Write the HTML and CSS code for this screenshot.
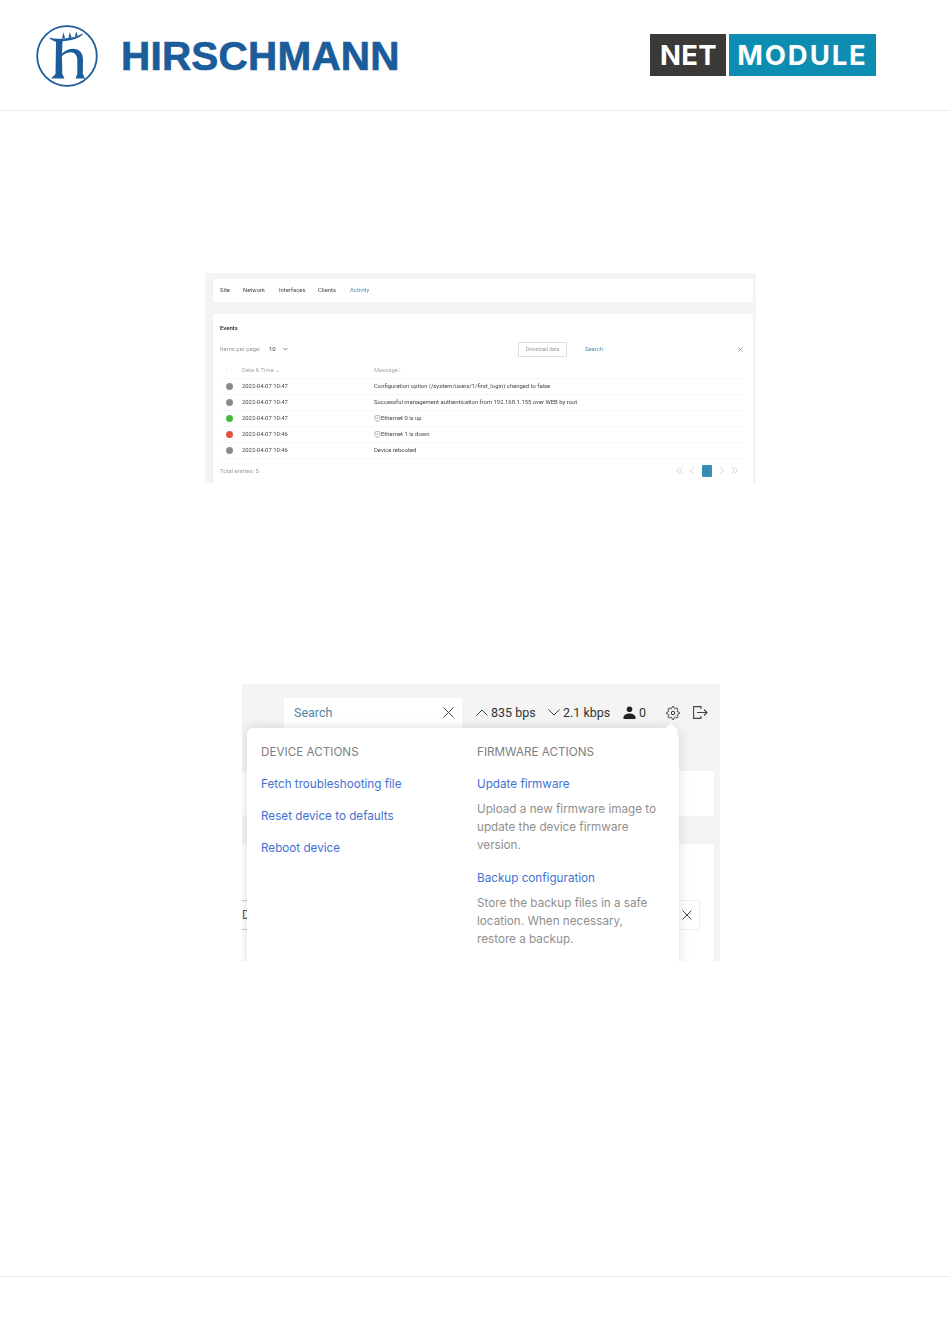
FILE: index.html
```html
<!DOCTYPE html>
<html lang="en">
<head>
  <meta charset="utf-8">
  <title>NetModule manual page</title>
  <link rel="stylesheet" href="styles.css">
</head>
<body>
  <!-- Logos -->
  <header class="page-head">
    <div class="brand">
      <svg class="brand-mark" width="64" height="64" viewBox="0 0 64 64" aria-hidden="true">
        <circle cx="32" cy="32" r="29.800" fill="none" stroke="#1b5c9b" stroke-width="1.800"/>
        <path fill="#1b5c9b" d="M14.500 13.800C17 14.300 19.500 14.700 22 14.700C32 14.700 42 13.500 47.500 9.500L48 10.200C44 14.800 35 16.500 27.500 17.300L27 29.500C30 26.500 34 24.800 38 24.800C44.500 24.800 48 29 48 35.500L47.800 50L50 54.500L40.500 54.500L42.300 50L42.300 36C42.300 31 39.500 28.200 35.800 28.200C32.500 28.200 29.500 29.800 27 32L27.300 50L29.500 54.500L16 54.500L20.500 50L21 17.800C18.500 17 16.200 15.800 14.500 14.500z"/>
        <path fill="#1b5c9b" d="M27 14.300l1.500-6 1.500 5.800zM33.500 14l1.300-6 1.700 5.500zM39.800 13l1.300-5.500 1.700 4.200z"/>
      </svg>
      <span class="brand-name">HIRSCHMANN</span>
    </div>
    <div class="netmodule">
      <span class="nm-net">NET</span>
      <span class="nm-module">MODULE</span>
    </div>
  </header>

  <main class="page-body">
    <!-- Events screenshot -->
    <section class="shot shot-events">
      <nav class="tabs card">
        <span class="tab tab-site">Site</span>
        <span class="tab tab-network">Network</span>
        <span class="tab tab-interfaces">Interfaces</span>
        <span class="tab tab-clients">Clients</span>
        <span class="tab active">Activity</span>
      </nav>
      <div class="events card">
        <h2>Events</h2>
        <div class="ev-tools">
          <span class="ev-muted">Items per page:</span>
          <span class="ev-count">10</span>
          <svg class="ev-chev" width="5" height="4" viewBox="0 0 5 4"><path d="M.5 1l2 2 2-2" fill="none" stroke="#333" stroke-width=".6"/></svg>
          <span class="ev-download">Download data</span>
          <span class="ev-search">Search</span>
          <svg class="ev-x" width="5" height="5" viewBox="0 0 5 5"><path d="M.3.3l4.400 4.400M4.700.3L.3 4.700" stroke="#555" stroke-width=".5"/></svg>
        </div>
        <div class="ev-row ev-head">
          <span class="ev-dot-col"><i class="sort">⁝</i></span>
          <span class="ev-date">Date &amp; Time ⌄</span>
          <span>Message ⁝</span>
        </div>
        <div class="ev-row"><span class="ev-dot-col"><i class="dot grey"></i></span><span class="ev-date">2022-04-07 10:47</span><span>Configuration option (/system/users/1/first_login) changed to false</span></div>
        <div class="ev-row"><span class="ev-dot-col"><i class="dot grey"></i></span><span class="ev-date">2022-04-07 10:47</span><span>Successful management authentication from 192.168.1.155 over WEB by root</span></div>
        <div class="ev-row"><span class="ev-dot-col"><i class="dot green"></i></span><span class="ev-date">2022-04-07 10:47</span><span class="ev-msg"><svg width="7" height="7" viewBox="0 0 7 7"><path d="M1 1l2.500-.6L6 1v2.500C6 5 4.500 6 3.500 6.500 2.500 6 1 5 1 3.500z" fill="none" stroke="#666" stroke-width=".5"/><circle cx="3.500" cy="3" r=".7" fill="#888"/></svg>Ethernet 0 is up</span></div>
        <div class="ev-row"><span class="ev-dot-col"><i class="dot red"></i></span><span class="ev-date">2022-04-07 10:46</span><span class="ev-msg"><svg width="7" height="7" viewBox="0 0 7 7"><path d="M1 1l2.500-.6L6 1v2.500C6 5 4.500 6 3.500 6.500 2.500 6 1 5 1 3.500z" fill="none" stroke="#666" stroke-width=".5"/><circle cx="3.500" cy="3" r=".7" fill="#888"/></svg>Ethernet 1 is down</span></div>
        <div class="ev-row"><span class="ev-dot-col"><i class="dot grey"></i></span><span class="ev-date">2022-04-07 10:46</span><span>Device rebooted</span></div>
        <div class="ev-foot">
          <span class="ev-muted ev-total">Total entries: 5</span>
          <div class="pager">
            <svg width="7" height="7" viewBox="0 0 7 7"><path d="M3.500.5l-3 3 3 3M6.500.5l-3 3 3 3" fill="none" stroke="#bbb" stroke-width=".7"/></svg>
            <svg width="4" height="7" viewBox="0 0 4 7"><path d="M3.500.5l-3 3 3 3" fill="none" stroke="#bbb" stroke-width=".7"/></svg>
            <b>1</b>
            <svg width="4" height="7" viewBox="0 0 4 7"><path d="M.5.5l3 3-3 3" fill="none" stroke="#bbb" stroke-width=".7"/></svg>
            <svg width="7" height="7" viewBox="0 0 7 7"><path d="M.5.5l3 3-3 3M3.500.5l3 3-3 3" fill="none" stroke="#bbb" stroke-width=".7"/></svg>
          </div>
        </div>
      </div>
    </section>

    <!-- Device menu screenshot -->
    <section class="shot shot-menu">
      <div class="topbar">
        <div class="top-search">
          <span>Search</span>
          <svg width="11" height="11" viewBox="0 0 11 11"><path d="M.5.5l10 10M10.500.5l-10 10" stroke="#444" stroke-width="1"/></svg>
        </div>
        <div class="stat stat-up">
          <svg width="12" height="7" viewBox="0 0 12 7"><path d="M.5 6.500L6 1l5.500 5.500" fill="none" stroke="#444"/></svg>835 bps
        </div>
        <div class="stat stat-down">
          <svg width="12" height="7" viewBox="0 0 12 7"><path d="M.5.5L6 6 11.500.5" fill="none" stroke="#444"/></svg>2.1 kbps
        </div>
        <div class="stat stat-users">
          <svg width="13" height="13" viewBox="0 0 13 13"><circle cx="6.500" cy="3.300" r="2.800" fill="#222"/><path d="M.5 13v-1.500c0-2.500 3-4 6-4s6 1.500 6 4V13z" fill="#222"/></svg>0
        </div>
        <svg class="top-gear" width="14" height="14" viewBox="0 0 24 24" fill="none" stroke="#333" stroke-width="1.700"><circle cx="12" cy="12" r="3"/><path d="M19.400 15a1.650 1.650 0 0 0 .33 1.820l.06.06a2 2 0 0 1 0 2.830 2 2 0 0 1-2.830 0l-.06-.06a1.650 1.650 0 0 0-1.820-.33 1.650 1.650 0 0 0-1 1.510V21a2 2 0 0 1-2 2 2 2 0 0 1-2-2v-.09A1.650 1.650 0 0 0 9 19.400a1.650 1.650 0 0 0-1.820.33l-.06.06a2 2 0 0 1-2.830 0 2 2 0 0 1 0-2.830l.06-.06a1.650 1.650 0 0 0 .33-1.820 1.650 1.650 0 0 0-1.510-1H3a2 2 0 0 1-2-2 2 2 0 0 1 2-2h.09A1.650 1.650 0 0 0 4.600 9a1.650 1.650 0 0 0-.33-1.820l-.06-.06a2 2 0 0 1 0-2.830 2 2 0 0 1 2.830 0l.06.06a1.650 1.650 0 0 0 1.820.33H9a1.650 1.650 0 0 0 1-1.510V3a2 2 0 0 1 2-2 2 2 0 0 1 2 2v.09a1.650 1.650 0 0 0 1 1.510 1.650 1.650 0 0 0 1.820-.33l.06-.06a2 2 0 0 1 2.830 0 2 2 0 0 1 0 2.830l-.06.06a1.650 1.650 0 0 0-.33 1.820V9a1.650 1.650 0 0 0 1.510 1H21a2 2 0 0 1 2 2 2 2 0 0 1-2 2h-.09a1.650 1.650 0 0 0-1.510 1z"/></svg>
        <svg class="top-exit" width="15" height="13" viewBox="0 0 15 13" fill="none" stroke="#444" stroke-width="1.100"><path d="M8 3V.6H.6v11.800H8V10M4 6.500h10M11 3.500l3 3-3 3"/></svg>
      </div>
      <div class="under under-one"></div>
      <div class="under under-two">
        <div class="under-line"><span>D</span></div>
        <div class="under-x"><svg width="10" height="10" viewBox="0 0 10 10"><path d="M.5.5l9 9M9.500.5l-9 9" stroke="#444"/></svg></div>
      </div>

      <div class="menu">
        <div class="menu-col">
          <h3>DEVICE ACTIONS</h3>
          <a class="menu-link">Fetch troubleshooting file</a>
          <a class="menu-link">Reset device to defaults</a>
          <a class="menu-link">Reboot device</a>
        </div>
        <div class="menu-col">
          <h3>FIRMWARE ACTIONS</h3>
          <a class="menu-link">Update firmware</a>
          <p>Upload a new firmware image to update the device firmware version.</p>
          <a class="menu-link">Backup configuration</a>
          <p>Store the backup files in a safe location. When necessary, restore a backup.</p>
        </div>
      </div>
    </section>
  </main>

  <footer class="page-foot"></footer>
</body>
</html>
```

FILE: styles.css
```css
*{box-sizing:border-box;}
html,body{height:100%;}
body{
  margin:0;
  background:#fff;
  font-family:Roboto,sans-serif;
  display:flex;
  flex-direction:column;
  height:1344px;
  overflow:hidden;
}

/* logos */
.page-head{
  height:111px;
  flex:none;
  border-bottom:1px solid #ebebeb;
  padding:24px 0 0 35px;
  display:flex;
  align-items:flex-start;
}
.brand{display:flex;align-items:center;width:615px;height:64px;}
.brand-mark{flex:none;}
.brand-name{
  margin-left:22px;
  font:bold 40.500px "Liberation Sans",sans-serif;
  color:#1b5c9b;
  letter-spacing:.2px;
  line-height:66px;
  -webkit-text-stroke:.7px #1b5c9b;
}
.netmodule{display:flex;gap:3px;margin-top:10px;height:42px;font:700 27.500px Inter,sans-serif;color:#fff;line-height:42px;}
.nm-net{width:76px;background:#3a3937;text-align:center;letter-spacing:.4px;padding-left:1px;}
.nm-module{width:147px;background:#0c8db1;text-align:center;letter-spacing:1.900px;}

.page-body{flex:1;display:flex;flex-direction:column;align-items:flex-start;}
.page-foot{height:68px;flex:none;border-top:1px solid #ebebeb;}

/* shared */
.shot{position:relative;overflow:hidden;background:#f4f4f4;}
.card{background:#fff;box-shadow:0 0 1px rgba(0,0,0,.1);}

/* events screenshot */
.shot-events{
  width:551px;
  height:210px;
  margin:162px 0 0 205px;
  padding:6px 3px 0 8px;
  font-size:5.900px;
  color:#444;
  filter:blur(.25px);
}
.tabs{height:23px;display:flex;align-items:center;padding:0 0 1px 7px;}
.tab-site{width:23px;}
.tab-network{width:36px;}
.tab-interfaces{width:39px;}
.tab-clients{width:32px;}
.tab.active{color:#4a8fb5;}
.events{margin-top:12px;height:180px;padding:10px 7px 0 7px;}
.events h2{margin:0;font-size:6px;font-weight:500;line-height:8px;color:#222;}
.ev-tools{display:flex;align-items:center;height:16px;margin-top:9px;}
.ev-muted{color:#999;width:49px;white-space:nowrap;}
.ev-count{width:14px;}
.ev-chev{margin-right:230px;}
.ev-download{
  width:49px;height:15px;line-height:13px;text-align:center;
  border:1px solid #ddd;border-radius:1px;color:#999;font-size:5px;
}
.ev-search{margin-left:18px;width:153px;color:#4a8fb5;}
.ev-head{color:#aaa;}
.ev-row{
  display:flex;align-items:center;height:16px;
  border-bottom:1px solid #f7f7f7;
  margin-right:1px;
}
.ev-row:last-of-type{border-bottom:0;}
.ev-head{margin-top:5.500px;}
.ev-dot-col{width:22px;padding-left:6px;display:flex;}
.ev-date{width:132px;}
.ev-msg{display:flex;align-items:center;}
.sort{font-style:normal;color:#ccc;}
.dot{width:7px;height:7px;border-radius:50%;display:block;}
.grey{background:#8a8a8e;}
.green{background:#45bb3c;}
.red{background:#df4f43;}
.ev-foot{display:flex;justify-content:space-between;align-items:center;height:12px;margin-top:6px;margin-right:8px;}
.pager{display:flex;align-items:center;gap:7px;}
.pager b{width:10px;height:12px;margin:0 1px;background:#3a8db5;color:#1d6f97;font-size:5px;font-weight:400;line-height:12px;text-align:center;border-radius:1px;}

/* device menu screenshot */
.shot-menu{
  width:478px;
  height:277px;
  margin:201px 0 0 242px;
  padding-top:14px;
}
.topbar{height:30px;display:flex;align-items:center;color:#333;font-size:12.500px;padding:0 0 1px 42px;}
.top-search{
  width:178px;height:30px;align-self:flex-start;background:#fff;
  display:flex;align-items:center;justify-content:space-between;
  padding:0 8px 1px 10px;color:#4b87a8;
}
.stat{display:flex;align-items:center;gap:3px;}
.stat-up{margin-left:14px;width:72px;}
.stat-down{width:75px;}
.stat-users{width:43px;gap:3px;}
.top-gear{margin-right:13px;}
.under{background:#fff;margin-right:6px;border-radius:2px;}
.under-one{height:45px;margin-top:43px;}
.under-two{height:117px;margin-top:28px;padding-top:56px;position:relative;}
.under-line{height:30px;margin-right:60px;border-top:1px solid #ccc;border-bottom:1px solid #ccc;font-size:12px;color:#555;line-height:28px;}
.under-x{
  position:absolute;right:14px;top:56px;
  width:27px;height:30px;border:1px solid #f0f0f0;
  display:flex;align-items:center;justify-content:center;
}

.menu{
  position:absolute;
  left:5px;top:44px;
  width:432px;
  height:240px;
  background:#fff;
  border-radius:6px 10px 0 0;
  box-shadow:0 0 12px rgba(0,0,0,.14);
  display:flex;
  padding:15px 0 0 14px;
  font:11.700px/18px Inter,sans-serif;
}
.menu::before{
  content:"";
  position:absolute;
  right:3px;top:-3px;
  width:10px;height:10px;
  background:#fff;
  transform:rotate(45deg);
}
.menu-col{width:216px;flex:none;position:relative;}
.menu-col h3{margin:0 0 14px;font-size:11.700px;font-weight:400;line-height:18px;color:#808080;}
.menu-link{display:block;color:#4371d2;line-height:18px;margin-bottom:14px;}
.menu-col p{margin:-7px 0 15px;color:#8f8f8f;width:185px;}
```
